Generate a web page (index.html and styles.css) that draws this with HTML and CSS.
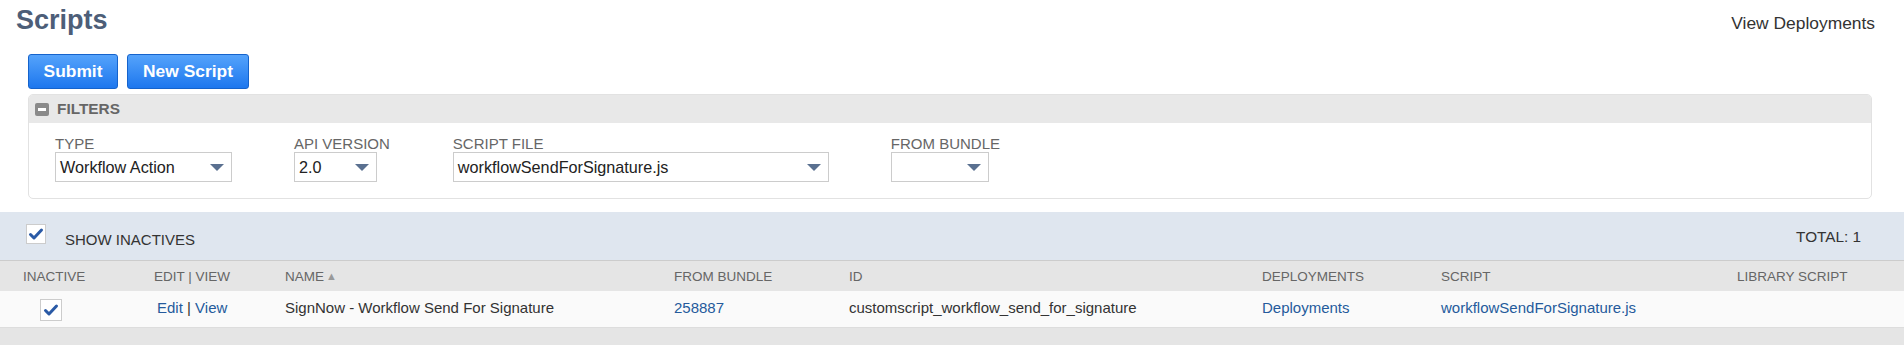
FILE: index.html
```html
<!DOCTYPE html>
<html lang="en">
<head>
  <meta charset="UTF-8" />
  <meta name="viewport" content="width=device-width, initial-scale=1.0">
  <title>Scripts</title>
  <link rel="stylesheet" href="styles.css">
</head>
<body>
  <div class="page-header">
    <h1>Scripts</h1>
    <a class="top-link" href="#">View Deployments</a>
  </div>

  <div class="actions">
    <button class="btn">Submit</button>
    <button class="btn">New Script</button>
  </div>

  <div class="filters">
    <div class="filters-head">
      <span class="collapse-icon"></span>
      <span>FILTERS</span>
    </div>
    <div class="filters-body">
      <div class="field">
        <label>TYPE</label>
        <div class="select type-select">Workflow Action<span class="arrow"></span></div>
      </div>
      <div class="field field-api">
        <label>API VERSION</label>
        <div class="select api-select">2.0<span class="arrow"></span></div>
      </div>
      <div class="field">
        <label>SCRIPT FILE</label>
        <div class="select file-select">workflowSendForSignature.js<span class="arrow"></span></div>
      </div>
      <div class="field">
        <label>FROM BUNDLE</label>
        <div class="select bundle-select"><span class="arrow"></span></div>
      </div>
    </div>
  </div>

  <div class="list-bar">
    <div class="show-inactives">
      <span class="checkbox">
        <svg width="16" height="14" viewBox="0 0 16 14"><path d="M2.5 7.5 L6 11 L13.5 3" fill="none" stroke="#2a5aa6" stroke-width="3" stroke-linecap="round" stroke-linejoin="round"/></svg>
      </span>
      <span class="show-label">SHOW INACTIVES</span>
    </div>
    <div class="total">TOTAL: 1</div>
  </div>

  <div class="grid-row list-head">
    <div>INACTIVE</div>
    <div>EDIT | VIEW</div>
    <div>NAME<span class="sort">&#9650;</span></div>
    <div>FROM BUNDLE</div>
    <div>ID</div>
    <div>DEPLOYMENTS</div>
    <div>SCRIPT</div>
    <div>LIBRARY SCRIPT</div>
  </div>

  <div class="grid-row list-item">
    <div>
      <span class="checkbox row-check">
        <svg width="16" height="14" viewBox="0 0 16 14"><path d="M2.5 7.5 L6 11 L13.5 3" fill="none" stroke="#2a5aa6" stroke-width="3" stroke-linecap="round" stroke-linejoin="round"/></svg>
      </span>
    </div>
    <div class="edit-view"><a href="#">Edit</a> | <a href="#">View</a></div>
    <div>SignNow - Workflow Send For Signature</div>
    <div><a href="#">258887</a></div>
    <div>customscript_workflow_send_for_signature</div>
    <div><a href="#">Deployments</a></div>
    <div><a href="#">workflowSendForSignature.js</a></div>
    <div></div>
  </div>

  <div class="list-foot"></div>
</body>
</html>
```

FILE: styles.css
```css
html, body {
  margin: 0;
  padding: 0;
  background-color: #FFFFFF;
  color: #222222;
  font-family: "Liberation Sans", Arial, sans-serif;
}
a {
  color: #255a9c;
  text-decoration: none;
}
.page-header {
  display: flex;
  justify-content: space-between;
  align-items: baseline;
  padding: 4px 29px 0 16px;
}
.page-header h1 {
  margin: 0;
  font-size: 27px;
  line-height: 32px;
  font-weight: bold;
  color: #4d5e78;
}
.top-link {
  font-size: 17.4px;
  color: #333333;
}
.actions {
  display: flex;
  gap: 9px;
  margin: 18px 0 0 28px;
}
.btn {
  height: 35px;
  padding: 0 13px;
  font-family: inherit;
  font-size: 17.4px;
  font-weight: bold;
  color: #FFFFFF;
  background: linear-gradient(#55a3fb, #1d77ee);
  border: 1px solid #1563cc;
  border-radius: 3px;
  cursor: pointer;
}
.btn:first-child {
  width: 90px;
}
.btn:last-child {
  width: 122px;
}
.filters {
  margin: 5px 32px 0 28px;
  border: 1px solid #e2e2e2;
  border-radius: 5px;
}
.filters-head {
  display: flex;
  align-items: center;
  gap: 8px;
  height: 28px;
  padding-left: 6px;
  background-color: #e8e8e8;
  border-radius: 4px 4px 0 0;
  font-size: 15.4px;
  font-weight: bold;
  color: #666666;
}
.collapse-icon {
  position: relative;
  width: 14px;
  height: 13px;
  background-color: #8a8a8a;
  border-radius: 2px;
}
.collapse-icon::after {
  content: "";
  position: absolute;
  left: 3px;
  top: 5px;
  width: 8px;
  height: 3px;
  background-color: #FFFFFF;
}
.filters-body {
  display: flex;
  gap: 62px;
  padding: 12px 0 16px 26px;
}
.field-api {
  margin-right: 1px;
}
.field label {
  display: block;
  font-size: 15px;
  line-height: 17px;
  color: #666666;
}
.select {
  position: relative;
  box-sizing: border-box;
  height: 30px;
  padding-left: 4px;
  border: 1px solid #cccccc;
  font-size: 16.2px;
  line-height: 28px;
  color: #222222;
  background-color: #FFFFFF;
}
.type-select { width: 177px; }
.api-select { width: 83px; }
.file-select { width: 376px; }
.bundle-select { width: 98px; }
.arrow {
  position: absolute;
  right: 7px;
  top: 11px;
  width: 0;
  height: 0;
  border-left: 7px solid transparent;
  border-right: 7px solid transparent;
  border-top: 7px solid #5a7090;
}
.list-bar {
  display: flex;
  justify-content: space-between;
  align-items: center;
  height: 48px;
  margin-top: 13px;
  padding: 0 43px 0 26px;
  background-color: #dfe6ef;
  border-bottom: 1px solid #cccccc;
}
.show-inactives {
  display: flex;
  align-items: center;
}
.checkbox {
  display: inline-flex;
  align-items: center;
  justify-content: center;
  box-sizing: border-box;
  width: 20px;
  height: 20px;
  background-color: #FFFFFF;
  border: 1px solid #cccccc;
  margin-bottom: 5px;
}
.show-label {
  margin: 7px 0 0 19px;
  font-size: 15px;
  line-height: 17px;
  color: #333333;
}
.total {
  margin-top: 1px;
  font-size: 15.3px;
  color: #333333;
}
.grid-row {
  display: grid;
  grid-template-columns: 131px 131px 389px 175px 413px 179px 296px 1fr;
  align-items: center;
  padding-left: 23px;
}
.list-head {
  height: 30px;
  background-color: #e5e5e5;
  font-size: 13.5px;
  color: #666666;
}
.sort {
  margin-left: 2px;
  font-size: 11px;
  color: #999999;
  vertical-align: 1px;
}
.list-item {
  box-sizing: border-box;
  height: 37px;
  padding-bottom: 4px;
  background-color: #fafafa;
  border-bottom: 1px solid #dddddd;
  font-size: 15px;
  color: #333333;
}
.row-check {
  width: 22px;
  height: 22px;
  margin: 6px 0 0 17px;
}
.edit-view {
  padding-left: 3px;
  color: #333333;
}
.list-foot {
  height: 17px;
  background-color: #e5e5e5;
}
```
